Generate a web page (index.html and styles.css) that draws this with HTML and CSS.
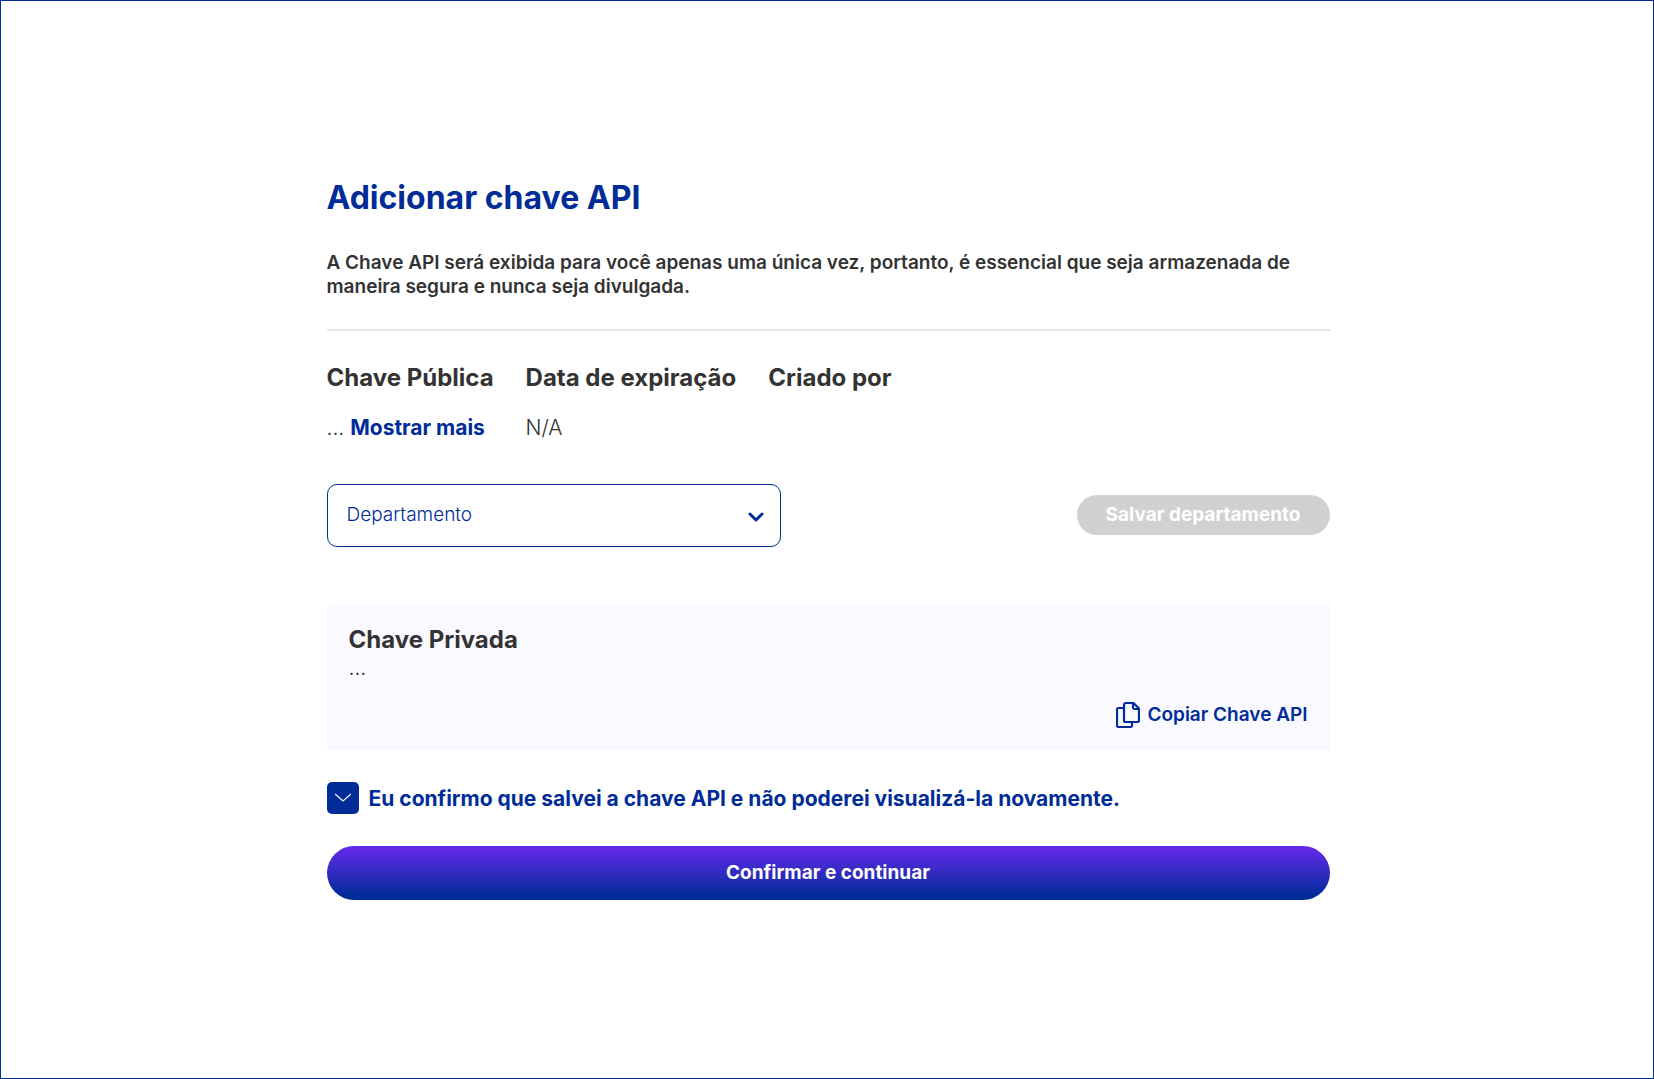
FILE: index.html
```html
<!DOCTYPE html>
<html lang="pt-BR">
<head>
<meta charset="utf-8">
<meta name="viewport" content="width=device-width, initial-scale=1">
<title>Adicionar chave API</title>
<link rel="stylesheet" href="styles.css">
</head>
<body>
<main class="page">
  <form class="panel">
    <h1 class="title">Adicionar chave API</h1>
    <p class="notice">A Chave API será exibida para você apenas uma única vez, portanto, é essencial que seja armazenada de maneira segura e nunca seja divulgada.</p>
    <hr class="rule">
    <table class="details">
      <thead>
        <tr><th scope="col">Chave Pública</th><th scope="col">Data de expiração</th><th scope="col">Criado por</th></tr>
      </thead>
      <tbody>
        <tr><td>... <a class="more" href="#">Mostrar mais</a></td><td>N/A</td><td></td></tr>
      </tbody>
    </table>
    <div class="department">
      <div class="select-wrap">
        <select class="select" aria-label="Departamento">
          <option>Departamento</option>
        </select>
        <svg class="chevron" width="16" height="10" viewBox="0 0 16 10" aria-hidden="true"><path d="M2 2l6 6 6-6" fill="none" stroke="currentColor" stroke-width="3" stroke-linecap="round" stroke-linejoin="round"/></svg>
      </div>
      <button class="save" type="button" disabled>Salvar departamento</button>
    </div>
    <section class="private">
      <h2 class="private-title">Chave Privada</h2>
      <p class="private-key">...</p>
      <button class="copy" type="button">
        <svg width="24" height="26" viewBox="0 0 24 26" fill="none" stroke="currentColor" stroke-width="2.200" stroke-linejoin="round" aria-hidden="true"><path d="M10 1h7.500L23 6.500v12a1.500 1.500 0 0 1-1.500 1.500H9.500A1.500 1.500 0 0 1 8 18.500V3a2 2 0 0 1 2-2z"/><path d="M17 1v4.500a1.500 1.500 0 0 0 1.500 1.500H23"/><path d="M8 6H2.500A1.500 1.500 0 0 0 1 7.500v16A1.500 1.500 0 0 0 2.500 25h12a1.500 1.500 0 0 0 1.500-1.500V20"/></svg>
        Copiar Chave API
      </button>
    </section>
    <label class="confirm">
      <span class="check">
        <input class="check-input" type="checkbox" checked>
        <svg class="check-mark" width="16" height="10" viewBox="0 0 16 10" aria-hidden="true"><path d="M0 1l8 7 8-7" fill="none" stroke="currentColor" stroke-width="1.300"/></svg>
      </span>
      Eu confirmo que salvei a chave API e não poderei visualizá-la novamente.
    </label>
    <button class="submit" type="submit">Confirmar e continuar</button>
  </form>
</main>
</body>
</html>
```
FILE: styles.css
```css
:root {
  --blue: #002c98;
  --ink: #333333;
}

* {
  box-sizing: border-box;
}

body {
  margin: 0;
  background: #ffffff;
  color: var(--ink);
  font-family: Inter, "Liberation Sans", sans-serif;
}

.page {
  display: flex;
  align-items: center;
  justify-content: center;
  min-height: 100vh;
  padding: 32px 32px 34px 34px;
  border: 1px solid var(--blue);
}

.panel {
  display: flex;
  flex-direction: column;
  width: 100%;
  max-width: 1003px;
}

.title {
  margin: 0 0 33px;
  color: var(--blue);
  font-size: 32px;
  font-weight: 700;
  line-height: 40px;
}

.notice {
  margin: 0 0 30px;
  font-size: 19px;
  font-weight: 600;
  line-height: 24px;
}

.rule {
  width: 100%;
  height: 2px;
  margin: 0 0 31px;
  border: 0;
  background: #e6e6e6;
}

.details {
  align-self: flex-start;
  margin-bottom: 40px;
  border-collapse: collapse;
  text-align: left;
}

.details th {
  padding: 0 32px 18px 0;
  font-size: 24px;
  font-weight: 700;
  line-height: 32px;
}

.details td {
  padding: 0 32px 0 0;
  font-size: 21px;
  font-weight: 300;
  line-height: 32px;
}

.details .more {
  color: var(--blue);
  font-weight: 700;
  text-decoration: none;
}

.department {
  display: flex;
  align-items: center;
  justify-content: space-between;
  gap: 32px;
  margin-bottom: 56px;
}

.select-wrap {
  position: relative;
  flex: 0 1 454px;
}

.select {
  width: 100%;
  height: 63px;
  padding: 0 48px 0 19px;
  border: 1px solid var(--blue);
  border-radius: 10px;
  appearance: none;
  background: #ffffff;
  color: var(--blue);
  font: 300 19px/24px Inter, "Liberation Sans", sans-serif;
}

.chevron {
  position: absolute;
  top: 28px;
  right: 17px;
  color: var(--blue);
  pointer-events: none;
}

.save {
  height: 40px;
  padding: 0 29px;
  border: 0;
  border-radius: 20px;
  background: #d1d1d1;
  color: #ffffff;
  font: 700 19px/24px Inter, "Liberation Sans", sans-serif;
}

.private {
  display: flex;
  flex-direction: column;
  margin-bottom: 32px;
  padding: 21px 22px 22px;
  background: #faf9ff;
}

.private-title {
  margin: 0;
  font-size: 24px;
  font-weight: 700;
  line-height: 32px;
}

.private-key {
  margin: 0 0 22px;
  font-size: 21px;
  font-weight: 300;
  line-height: 24px;
}

.copy {
  display: flex;
  align-items: center;
  align-self: flex-end;
  gap: 7px;
  padding: 0;
  border: 0;
  background: none;
  color: var(--blue);
  font: 600 19px/24px Inter, "Liberation Sans", sans-serif;
}

.confirm {
  display: flex;
  align-items: flex-end;
  gap: 10px;
  margin-bottom: 32px;
  color: var(--blue);
  font-size: 21px;
  font-weight: 700;
  line-height: 30px;
}

.check {
  display: grid;
  flex: none;
  place-items: center;
}

.check-input,
.check-mark {
  grid-area: 1 / 1;
}

.check-input {
  width: 32px;
  height: 32px;
  margin: 0;
  border-radius: 5px;
  appearance: none;
  background: var(--blue);
}

.check-mark {
  color: #ffffff;
  pointer-events: none;
}

.submit {
  height: 54px;
  border: 0;
  border-radius: 27px;
  background: linear-gradient(#6229e8 6%, var(--blue) 94%);
  color: #ffffff;
  font: 700 19px/24px Inter, "Liberation Sans", sans-serif;
}
```
